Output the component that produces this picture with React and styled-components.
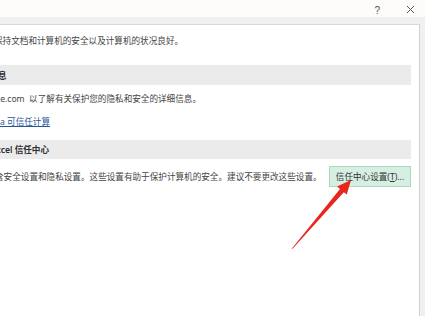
import React from 'react'
import styled, { createGlobalStyle } from 'styled-components'

const GlobalStyle = createGlobalStyle`
  html, body {
    margin: 0;
    padding: 0;
    background: #ffffff;
    overflow: hidden;
  }
  body {
    font-family: "Noto Sans", "Noto Sans CJK SC", sans-serif;
  }
`

const Window = styled.div`
  position: relative;
  width: 425px;
  height: 316px;
  background: #f0f0f0;
  display: flex;
  flex-direction: column;
  overflow: hidden;
`

const TitleBar = styled.div`
  height: 17px;
  background: #fdfcfa;
  display: flex;
  align-items: center;
  justify-content: flex-end;
  gap: 26px;
  padding-right: 10px;
  color: #555;
`

const Help = styled.span`
  font-family: "Liberation Sans", sans-serif;
  font-size: 10px;
  line-height: 1;
  margin-top: 4px;
`

const Body = styled.div`
  flex: 1;
  display: flex;
  padding: 7px 5px 0 0;
`

const Panel = styled.div`
  flex: 1;
  background: #ffffff;
  border-top: 1px solid #d9d9d9;
  border-right: 1px solid #d2d2d2;
  padding: 9px 8px 0 0;
  display: flex;
  flex-direction: column;
  overflow: hidden;
`

const Line = styled.div`
  font-size: 8.6px;
  line-height: 14px;
  height: 14px;
  color: #444;
  white-space: nowrap;
  margin-top: ${({ $top }) => $top || 0}px;
  margin-left: ${({ $shift }) => $shift || 0}px;
`

const Band = styled.div`
  height: ${({ $h }) => $h}px;
  margin-top: ${({ $top }) => $top}px;
  background: #ebebeb;
  display: flex;
  align-items: center;
  overflow: hidden;
`

const BandTitle = styled.span`
  font-size: 8.6px;
  font-weight: 600;
  color: #2e2e2e;
  white-space: nowrap;
  margin-left: ${({ $shift }) => $shift || 0}px;
`

const Link = styled.a`
  color: #2b5797;
  text-decoration: underline;
  cursor: pointer;
`

const SettingsRow = styled.div`
  margin-top: 7px;
  display: flex;
  align-items: center;
  justify-content: space-between;
`

const SettingsButton = styled.button`
  width: 82px;
  height: 21px;
  padding: 0;
  background: #d6efe2;
  border: 1px solid #a8dabc;
  color: #333;
  font-family: "Noto Sans", "Noto Sans CJK SC", sans-serif;
  font-size: 8.6px;
  white-space: nowrap;
  u {
    text-decoration: underline;
  }
`

const Arrow = styled.svg`
  position: absolute;
  left: 0;
  top: 0;
  pointer-events: none;
`

const CloseIcon = () => (
  <svg width="9" height="9" viewBox="0 0 9 9" style={{ marginTop: 2 }}>
    <path d="M1 1 L8 8 M8 1 L1 8" stroke="#555" strokeWidth="1" fill="none" />
  </svg>
)

export default function App() {
  return (
    <>
      <GlobalStyle />
      <Window>
        <TitleBar>
          <Help>?</Help>
          <CloseIcon />
        </TitleBar>
        <Body>
          <Panel>
            <Line $shift={-6}>保持文档和计算机的安全以及计算机的状况良好。</Line>
            <Band $h={20} $top={17}>
              <BandTitle $shift={-2}>息</BandTitle>
            </Band>
            <Line $top={7} $shift={-4}>ce.com&nbsp; 以了解有关保护您的隐私和安全的详细信息。</Line>
            <Line $top={9}>
              <Link>a 可信任计算</Link>
            </Line>
            <Band $h={19} $top={11}>
              <BandTitle $shift={-4}>xcel 信任中心</BandTitle>
            </Band>
            <SettingsRow>
              <Line $shift={-5}>含安全设置和隐私设置。这些设置有助于保护计算机的安全。建议不要更改这些设置。</Line>
              <SettingsButton>信任中心设置(<u>T</u>)...</SettingsButton>
            </SettingsRow>
          </Panel>
        </Body>
        <Arrow width="425" height="316" viewBox="0 0 425 316">
          <polygon
            points="291.5,249 292.8,248.6 343.8,192.2 346.8,194.6 351,180 337.1,186.6 340.0,189.0"
            fill="#e8261c"
          />
        </Arrow>
      </Window>
    </>
  )
}
